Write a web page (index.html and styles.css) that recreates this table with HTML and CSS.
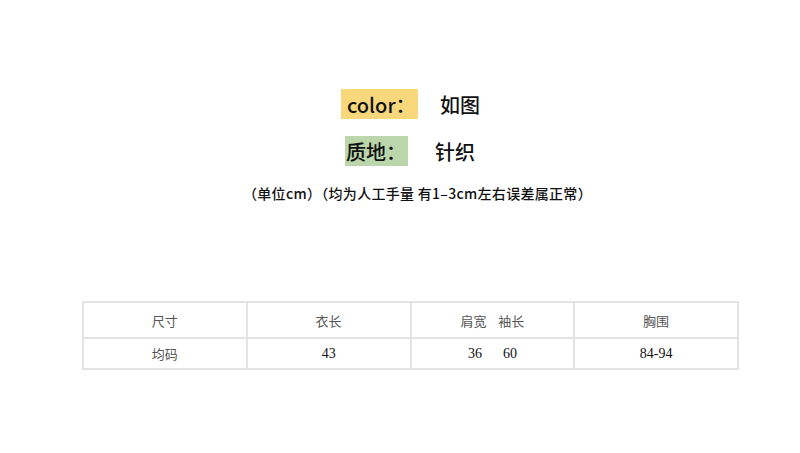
FILE: index.html
```html
<!DOCTYPE html>
<html lang="zh">
<head>
<meta charset="utf-8">
<link rel="stylesheet" href="styles.css">
</head>
<body>
<div class="page">
  <div class="line line-color">
    <span class="tag tag-yellow">color：</span>
    <span class="value">如图</span>
  </div>
  <div class="line line-material">
    <span class="tag tag-green">质地：</span>
    <span class="value">针织</span>
  </div>
  <p class="note">（单位cm）（均为人工手量 有1–3cm左右误差属正常）</p>
  <table class="size-table">
    <tr class="head">
      <td>尺寸</td>
      <td>衣长</td>
      <td>肩宽&nbsp;&nbsp;&nbsp;&nbsp;袖长</td>
      <td>胸围</td>
    </tr>
    <tr class="data">
      <td class="cjk">均码</td>
      <td>43</td>
      <td>36&nbsp;&nbsp;&nbsp;&nbsp;&nbsp;&nbsp;60</td>
      <td>84-94</td>
    </tr>
  </table>
</div>
</body>
</html>
```

FILE: styles.css
```css
* { box-sizing: border-box; }
html, body { margin: 0; padding: 0; background: #fff; }
body {
  width: 800px;
  height: 453px;
  overflow: hidden;
  font-family: "Noto Sans CJK SC", "Noto Sans", sans-serif;
  color: #111;
}
.page {
  display: flex;
  flex-direction: column;
  padding-top: 89px;
}
.line {
  display: flex;
  align-items: center;
  height: 30px;
}
.line-color { padding-left: 341px; gap: 22px; }
.line-material { padding-left: 345px; gap: 27px; margin-top: 17px; }
.tag {
  display: flex;
  align-items: center;
  height: 30px;
  font-size: 20px;
  font-weight: 500;
  padding-left: 6px;
}
.tag-yellow { background: #f8d87b; width: 77px; }
.tag-green { background: #bad6aa; width: 63px; padding-left: 1px; }
.value {
  font-size: 20px;
  font-weight: 500;
}
.note {
  margin: 17px 0 0 243px;
  font-size: 14px;
  font-weight: 500;
  line-height: 20px;
  letter-spacing: 0.3px;
}
.size-table {
  margin: 98px 0 0 82px;
  width: 657px;
  border-collapse: collapse;
  table-layout: fixed;
  border: 2px solid #e3e3e3;
}
.size-table td {
  border: 2px solid #e3e3e3;
  text-align: center;
  padding: 0;
}
.head td {
  height: 36px;
  font-size: 13px;
  color: #555;
}
.data td {
  height: 31px;
  font-family: "Liberation Serif", serif;
  font-size: 14px;
  color: #111;
}
.data td.cjk {
  font-family: "Noto Sans CJK SC", sans-serif;
  font-size: 13px;
  color: #555;
}
```
